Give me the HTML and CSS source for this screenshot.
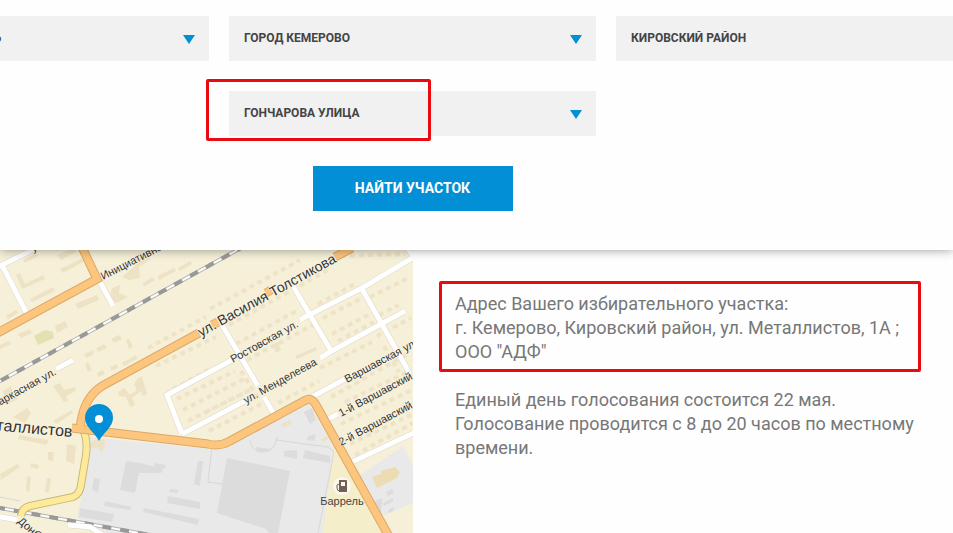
FILE: index.html
```html
<!DOCTYPE html>
<html lang="ru">
<head>
    <meta charset="UTF-8">
    <meta name="viewport" content="width=device-width, initial-scale=1.0">
    <title>Найти избирательный участок</title>
    <link rel="stylesheet" href="styles.css">
</head>
<body>
    <form class="search">
        <div class="filters">
            <div class="select-wrapper">
                <select class="select" name="region" aria-label="Регион">
                    <option>КЕМЕРОВСКАЯ ОБЛАСТЬ</option>
                </select>
            </div>
            <div class="select-wrapper">
                <select class="select" name="city" aria-label="Город">
                    <option>ГОРОД КЕМЕРОВО</option>
                </select>
            </div>
            <div class="select-wrapper">
                <select class="select" name="district" aria-label="Район">
                    <option>КИРОВСКИЙ РАЙОН</option>
                </select>
            </div>
            <div class="select-wrapper street">
                <select class="select" name="street" aria-label="Улица">
                    <option>ГОНЧАРОВА УЛИЦА</option>
                </select>
                <span class="street-mark"></span>
            </div>
            <button type="button" class="submit-btn">НАЙТИ УЧАСТОК</button>
        </div>
    </form>

    <main class="result">
        <svg class="map" viewBox="0 250 413 283" preserveAspectRatio="xMaxYMin slice" role="img" aria-label="Карта участка">
            <rect class="land" x="-600" y="250" width="1013" height="900"/>

            <!-- industrial areas -->
            <path class="meadow" d="M330 440L348 462L391 540H318Z"/>
            <path class="industry" d="M89 437L210 449L224 449L308 402L334 448L322 540H120L77 518L82 495L89 460Z"/>
            <path class="industry" d="M360 475L403 446L415 470V502L383 516Z"/>
            <path class="plot" d="M208 482L212 446M250 440Q252 453 264 452Q276 450 277 437M276 440L328 447L334 452L318 533M208 482L222 484"/>
            <path class="plant" d="M227 458L290 471L278 533H269L266 529L217 513ZM126 461L140 463L163 469L161 473L139 473L135 493L120 490ZM94 478L100 479L98 492L92 490ZM155 463L165 465V469L154 467ZM198 461L203 461L200 486L194 484ZM105 501L131 507V510L104 506ZM144 508L199 519L198 525L143 512ZM168 496L200 502V509L167 503ZM170 489L178 490V493L169 492ZM80 508L114 514L112 522L79 517ZM284 451L297 450L297 459L284 456ZM305 450L330 456V463L303 458ZM256 447L270 449L269 452L256 451ZM304 412L312 408L316 420L310 424ZM308 436L316 434L314 441L307 440ZM375 501L382 498L381 519L373 513ZM386 492L392 489L394 493L388 496ZM383 503L393 498V501L384 506ZM388 510L394 507V510L389 513Z"/>

            <!-- buildings -->
            <g class="houses">
                <path d="M23 260L36 253L38 256L25 263ZM16 275L20 273L25 284L43 275L45 279L22 289ZM30 299L53 287L55 291L32 302ZM60 269L83 258L85 261L63 273ZM57 255L73 248L76 252L61 260ZM75 304L97 295L99 300L78 309ZM112 288L120 285L119 293L128 297L116 303L110 298ZM122 277L135 266L131 262L142 255L151 259L139 267L140 278L129 280ZM142 284L152 277L155 280L145 286ZM158 276L174 268L176 271L159 280ZM178 268L190 261L192 264L180 271Z"/>
                <path d="M18 334L30 329L32 333L21 338ZM0 345L9 341L11 344L0 349ZM55 326L65 321L68 327L57 333ZM84 354L93 350V355L86 358ZM96 348L104 344L107 348L98 352ZM111 339L119 335L122 339L114 343ZM126 340L129 339L133 347L129 349ZM85 364L88 362L92 370L88 372ZM97 373L103 370L105 374L98 377ZM110 367L117 364L118 368L111 371ZM122 363L136 355L137 359L124 366ZM6 316L16 310L18 313L8 319Z"/>
                <path d="M53 386L60 383L64 390L75 387L76 391L66 396L68 401L64 402ZM118 392L124 388L130 395L137 390L134 384L138 378L142 376L147 394L143 396L141 391L132 398L135 405L130 407L126 397L119 396ZM13 417L27 408L31 413L25 423ZM54 420L72 410L73 413L56 424ZM3 391L11 386L14 396L5 400ZM4 402L16 396L18 399L6 405Z"/>
                <path d="M19 435L48 440L47 445L18 439ZM0 474L17 464L20 467L1 480ZM67 444L76 446L74 464L66 461ZM48 452L54 452L53 461L48 460ZM31 463L39 465L38 469L30 467ZM27 476L31 477L29 492L26 491ZM47 478L51 478L49 493L45 492ZM90 444L97 438L105 440L104 449L101 453L98 447L91 449ZM281 424L290 420L292 424L283 427ZM321 439L328 436L329 439L322 442ZM273 344L278 342L281 350L276 353ZM295 356L316 347L317 350L297 359Z"/>
            </g>
            <path class="depot" d="M372 477L381 474V471L395 467L400 472L397 478L377 488Z"/>
            <path class="park" d="M34 336L45 330L53 332L54 338L38 345Z"/>
            <g class="rows">
                <path d="M148 348L206 317M156 366L216 337M210 309L300 260M229 325L328 270M341 256L405 254M236 344L296 311M247 360L319 322M318 304L357 283M323 318L362 298M370 297L410 277M379 315L399 305M338 341L374 322M332 334L370 314M320 368L372 342M377 336L411 318M241 371L260 401M173 389L212 368M177 399L235 371M183 410L246 378M188 421L252 389M206 412L250 390M209 431L265 402M278 403L319 381M282 412L305 400M331 397L408 354M345 402L411 370M341 424L412 390M350 444L413 414M355 455L413 423M384 346L399 372"/>
            </g>

            <!-- railways -->
            <g class="rail">
                <path d="M-300 543L0 381L250 243"/>
                <path d="M-200 480L0 508L22 512L150 535"/>
            </g>
            <g class="rail-light">
                <path d="M-300 543L0 381L250 243"/>
                <path d="M-200 480L0 508L22 512L150 535"/>
            </g>
            <g class="rail-dash">
                <path d="M-300 543L0 381L250 243"/>
                <path d="M-200 480L0 508L22 512L150 535"/>
            </g>
            <path class="plot" d="M0 497L20 501"/>

            <!-- small streets, broken where a name stands -->
            <g class="street-edge">
                <path d="M-10 271L2 265L34 249M2 265L27 314M100 282L113 306M56 369L73 360M-5 516L18 520M68 525L90 527L104 536"/>
                <path d="M182 434L167 395L232 360M300 320L305 317L362 288L414 257L405 245M182 434L245 401M320 358L330 352L405 311M222 325L258 386M264 397L274 414M293 286L330 349M362 289L410 374M308 399L345 379M326 420L338 414M350 463L420 430"/>
            </g>
            <g class="street-fill">
                <path d="M-10 271L2 265L34 249M2 265L27 314M100 282L113 306M56 369L73 360M-5 516L18 520M68 525L90 527L104 536"/>
                <path d="M182 434L167 395L232 360M300 320L305 317L362 288L414 257L405 245M182 434L245 401M320 358L330 352L405 311M222 325L258 386M264 397L274 414M293 286L330 349M362 289L410 374M308 399L345 379M326 420L338 414M350 463L420 430"/>
            </g>

            <!-- main roads -->
            <path class="lane-edge" d="M83 430Q88 440 86 455L81 485Q80 494 73 497L30 506Q22 508 21 516"/>
            <path class="lane-fill" d="M83 430Q88 440 86 455L81 485Q80 494 73 497L30 506Q22 508 21 516"/>
            <g class="road-edge">
                <path d="M-10 337L97 279L81 245M80 430Q82 399 102 386L199 333M212 325L218 322M266 293L271 290M335 257L352 248M72 428L80 429L208 444Q220 447 230 441L304 401Q311 396 316 405L391 540"/>
            </g>
            <g class="road-fill">
                <path d="M-10 337L97 279L81 245M80 430Q82 399 102 386L199 333M212 325L218 322M266 293L271 290M335 257L352 248M72 428L80 429L208 444Q220 447 230 441L304 401Q311 396 316 405L391 540"/>
            </g>

            <!-- street names -->
            <g class="label">
                <text class="label-big" transform="translate(201 337) rotate(-29)">ул. Василия Толстикова</text>
                <text class="label-large" transform="translate(72 437) rotate(5)" text-anchor="end">ул. Металлистов</text>
                <text transform="translate(103 280) rotate(-27)">Инициативная ул.</text>
                <text transform="translate(57 374) rotate(-29)" text-anchor="end">Каркасная ул.</text>
                <text transform="translate(233 363) rotate(-29)">Ростовская ул.</text>
                <text transform="translate(246 404) rotate(-29)">ул. Менделеева</text>
                <text transform="translate(347 383) rotate(-28)">Варшавская ул.</text>
                <text transform="translate(341 417) rotate(-28)">1-й Варшавский пер.</text>
                <text transform="translate(341 446) rotate(-28)">2-й Варшавский пер.</text>
                <text transform="translate(17 522) rotate(41)">Донбасская ул.</text>
                <text transform="translate(33 252) rotate(-27)">ул. Леонова</text>
            </g>

            <!-- petrol station -->
            <circle class="poi" cx="342" cy="486" r="9"/>
            <path class="poi-icon" fill-rule="evenodd" d="M339 480H346Q347 480 347 481V492H339ZM341 482V486H345V482Z"/>
            <path class="poi-hose" d="M339 484Q336 484 337 488Q337 491 340 491"/>
            <text class="poi-name" x="342" y="505" text-anchor="middle">Баррель</text>

            <!-- polling station pin -->
            <path class="pin" d="M99 404A14 14 0 0 1 113 418C113 427 103 433 99 441C95 433 85 427 85 418A14 14 0 0 1 99 404Z"/>
            <circle class="pin-hole" cx="99" cy="419" r="4"/>
        </svg>

        <div class="info">
            <p class="address">Адрес Вашего избирательного участка:<br>г. Кемерово, Кировский район, ул. Металлистов, 1А ; ООО "АДФ"</p>
            <p class="notice">Единый день голосования состоится 22 мая. Голосование проводится с 8 до 20 часов по местному времени.</p>
        </div>
    </main>
</body>
</html>
```
FILE: styles.css
```css
* {
    box-sizing: border-box;
}

body {
    display: flex;
    flex-direction: column;
    height: 100vh;
    margin: 0;
    background: #fefefe;
    font-family: Roboto, "Liberation Sans", sans-serif;
    overflow: hidden;
}

.search {
    position: relative;
    z-index: 1;
    padding: 16px 0 39px;
    background: #fefefe;
    box-shadow: 0 0 10px rgba(0, 0, 0, 0.4);
}

/* the row of filters is wider than the window */
.filters {
    display: grid;
    grid-template-columns: repeat(3, 1fr);
    gap: 30px 20px;
    margin: 0 -30px 0 -158px;
}

.select-wrapper {
    position: relative;
}

.select-wrapper::after {
    content: "";
    position: absolute;
    top: 19px;
    right: 14px;
    border: 6px solid transparent;
    border-top: 9px solid #028fd5;
    border-bottom: 0;
    pointer-events: none;
}

.select {
    display: block;
    width: 100%;
    height: 45px;
    padding: 0 40px 2px 15px;
    border: none;
    border-radius: 0;
    background: #f1f1f1;
    color: #444;
    font-family: inherit;
    font-size: 12px;
    font-weight: bold;
    appearance: none;
}

.street {
    grid-column: 2;
}

.street-mark {
    position: absolute;
    top: -12px;
    left: -23px;
    width: 225px;
    height: 62px;
    border: 3px solid #ea0a10;
    border-radius: 2px;
    pointer-events: none;
}

.submit-btn {
    grid-column: 2;
    justify-self: center;
    width: 200px;
    height: 45px;
    padding: 0 0 2px;
    border: none;
    background: #028fd5;
    color: #fff;
    font-family: inherit;
    font-size: 14px;
    font-weight: bold;
    cursor: pointer;
}

.result {
    flex: 1;
    display: grid;
    grid-template-columns: 413fr 540fr;
    grid-template-rows: 100%;
    min-height: 0;
}

.info {
    padding: 31px 32px 0 26px;
    color: #777;
    font-size: 18px;
    line-height: 24px;
}

.address {
    margin: 0;
    padding: 8px 13px 5px;
    border: 3px solid #ea0a10;
    border-radius: 2px;
}

.notice {
    margin: 16px 0 0;
    padding: 0 0 0 16px;
}

/* map */
.map {
    display: block;
    width: 100%;
    height: 100%;
    min-width: 0;
}

.land {
    fill: #f6f0d9;
}

.meadow {
    fill: #f5eecb;
}

.industry {
    fill: #e9e9e9;
}

.plant {
    fill: #dcdcdc;
}

.plot {
    fill: none;
    stroke: #d9d7d0;
    stroke-width: 1;
}

.houses {
    fill: #ede2c4;
}

.depot {
    fill: #ecdcb4;
}

.park {
    fill: #e2e2b0;
}

.rows {
    fill: none;
    stroke: #eee3c6;
    stroke-width: 4;
    stroke-dasharray: 5 4;
}

.rail {
    fill: none;
    stroke: #b5b3ae;
    stroke-width: 4;
}

.rail-light {
    fill: none;
    stroke: #fff;
    stroke-width: 2;
}

.rail-dash {
    fill: none;
    stroke: #999;
    stroke-width: 4;
    stroke-dasharray: 9 9;
}

.street-edge {
    fill: none;
    stroke: #ddd6c6;
    stroke-width: 6;
}

.street-fill {
    fill: none;
    stroke: #fff;
    stroke-width: 5;
}

.lane-edge {
    fill: none;
    stroke: #c9b978;
    stroke-width: 8;
}

.lane-fill {
    fill: none;
    stroke: #fdeb9b;
    stroke-width: 6;
}

.road-edge {
    fill: none;
    stroke: #dca867;
    stroke-width: 9;
}

.road-fill {
    fill: none;
    stroke: #fdc67e;
    stroke-width: 7;
}

.label {
    fill: #333;
    stroke: #f9f4e6;
    stroke-width: 1px;
    paint-order: stroke;
    font-family: "Liberation Sans", Arial, sans-serif;
    font-size: 11px;
}

.label-big {
    font-size: 14px;
}

.label-large {
    font-size: 16px;
}

.poi {
    fill: #fbf8ee;
}

.poi-icon {
    fill: #725f55;
}

.poi-hose {
    fill: none;
    stroke: #725f55;
    stroke-width: 1;
}

.poi-name {
    fill: #444;
    font-family: "Liberation Sans", Arial, sans-serif;
    font-size: 11px;
}

.pin {
    fill: #028fd5;
}

.pin-hole {
    fill: #fff;
}
```
